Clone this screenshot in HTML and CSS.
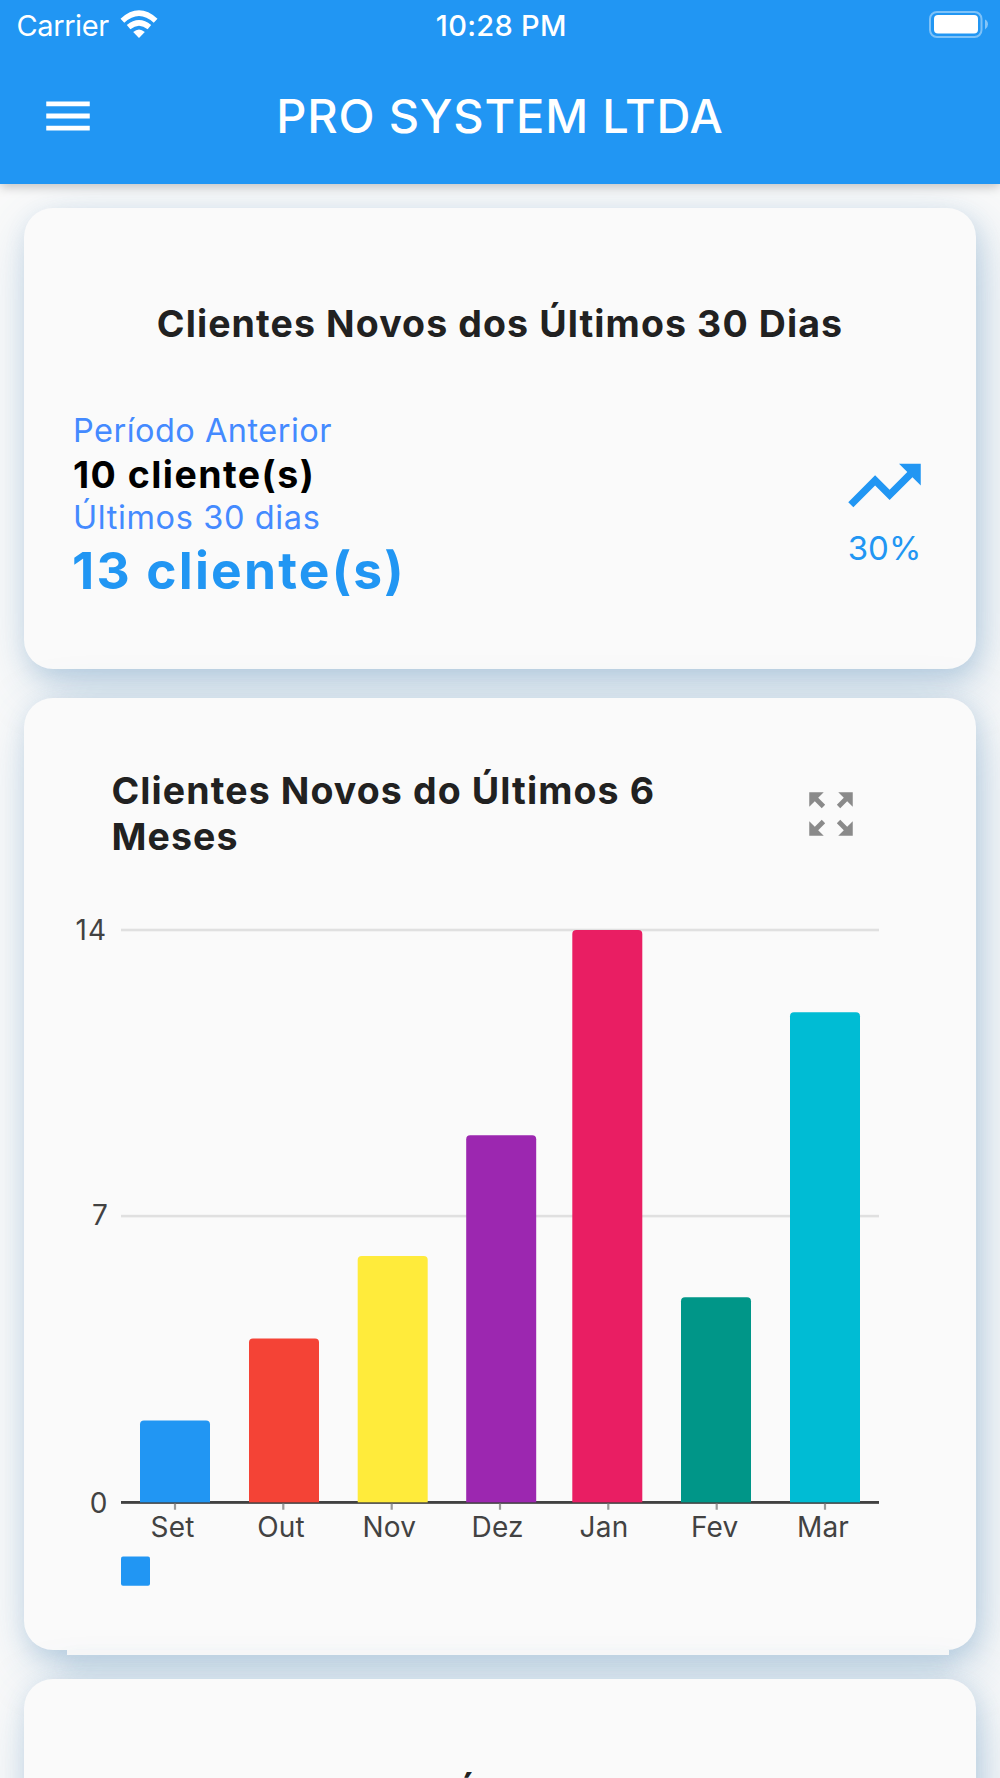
FILE: index.html
```html
<!DOCTYPE html>
<html lang="pt-BR">
<head>
<meta charset="utf-8">
<title>PRO SYSTEM LTDA</title>
<link rel="stylesheet" href="styles.css">
</head>
<body>
<div class="screen">
  <header class="app-bar">
    <div class="status-bar">
      <div class="carrier">
        <span>Carrier</span>
        <svg class="wifi" viewBox="0 0 38 28" width="38" height="28">
          <path d="M19 28 L13.2 22 Q19 17 24.8 22 Z" fill="#fff"/>
          <path d="M8.6 17.2 Q19 8.6 29.4 17.2" fill="none" stroke="#fff" stroke-width="5.6"/>
          <path d="M2.4 10.7 Q19 -4.4 35.6 10.7" fill="none" stroke="#fff" stroke-width="5.6"/>
        </svg>
      </div>
      <div class="clock">10:28 PM</div>
      <svg class="battery" viewBox="0 0 60 27" width="60" height="27">
        <rect x="1" y="1" width="51.5" height="25" rx="7" fill="none" stroke="#fff" stroke-opacity=".42" stroke-width="2"/>
        <rect x="5" y="4" width="44" height="18.5" rx="4" fill="#fff"/>
        <path d="M56 8.5 Q59 10 59 13.2 T56 18.5 Z" fill="#fff" fill-opacity=".45"/>
      </svg>
    </div>
    <div class="toolbar">
      <svg class="menu" viewBox="0 0 24 24" width="58" height="58"><path fill="#fff" d="M3 18h18v-2H3v2zm0-5h18v-2H3v2zm0-7v2h18V6H3z"/></svg>
      <h1 class="app-title">PRO SYSTEM LTDA</h1>
    </div>
  </header>
  <main class="cards">
    <section class="card summary">
      <h2 class="card-title">Clientes Novos dos Últimos 30 Dias</h2>
      <div class="summary-body">
        <div class="stats">
          <div class="label previous">Período Anterior</div>
          <div class="value-small">10 cliente(s)</div>
          <div class="label recent">Últimos 30 dias</div>
          <div class="value-large">13 cliente(s)</div>
        </div>
        <div class="trend">
          <svg viewBox="0 0 24 24" width="87" height="87"><path fill="#2196f3" d="M16 6l2.29 2.29-4.88 4.88-4-4L2 16.59 3.41 18l6-6 4 4 6.3-6.29L22 12V6z"/></svg>
          <div class="percent">30%</div>
        </div>
      </div>
    </section>
    <section class="card chart-card">
      <div class="chart-head">
        <h2 class="card-title">Clientes Novos do Últimos 6 Meses</h2>
        <svg class="expand" viewBox="0 0 24 24" width="58" height="58"><path fill="#8a8a8a" d="M15 3l2.3 2.3-2.89 2.87 1.42 1.42L18.7 6.7 21 9V3zM3 9l2.3-2.3 2.87 2.89 1.42-1.42L6.7 5.3 9 3H3zM9 21l-2.3-2.3 2.89-2.87-1.42-1.42L5.3 17.3 3 15v6zM21 15l-2.3 2.3-2.87-2.89-1.42 1.42 2.89 2.87L15 21h6z"/></svg>
      </div>
      <svg class="chart" viewBox="67 900 882 700" width="882" height="700">
        <g fill="#e0e0e0">
          <rect x="121" y="928.7" width="758" height="2.6"/>
          <rect x="121" y="1214.8" width="758" height="2.6"/>
        </g>
        <rect x="121" y="1501" width="758" height="2.7" fill="#424242"/>
        <path fill="#2196f3" d="M140 1502.5V1424.5q0-4 4-4h62q4 0 4 4V1502.5z"/>
        <path fill="#f44336" d="M249 1502.5V1342.5q0-4 4-4h62q4 0 4 4V1502.5z"/>
        <path fill="#ffeb3b" d="M357.7 1502.5V1260q0-4 4-4h62q4 0 4 4V1502.5z"/>
        <path fill="#9c27b0" d="M466.2 1502.5V1139.2q0-4 4-4h62q4 0 4 4V1502.5z"/>
        <path fill="#e91e63" d="M572.3 1502.5V934q0-4 4-4h62q4 0 4 4V1502.5z"/>
        <path fill="#009688" d="M681 1502.5V1301.2q0-4 4-4h62q4 0 4 4V1502.5z"/>
        <path fill="#00bcd4" d="M790 1502.5V1016.2q0-4 4-4h62q4 0 4 4V1502.5z"/>
        <rect x="121" y="1502.5" width="758" height="1.2" fill="#424242" fill-opacity=".7"/>
        <path stroke="#9a9a9a" stroke-width="2.2" d="M175 1503.7v6M283.3 1503.7v6M391.7 1503.7v6M500 1503.7v6M608.3 1503.7v6M716.7 1503.7v6M825 1503.7v6"/>
        <g class="axis" text-anchor="end">
          <text x="107" y="940" letter-spacing="1">14</text>
          <text x="108" y="1225">7</text>
          <text x="107.5" y="1512.5">0</text>
        </g>
        <g class="axis" text-anchor="middle">
          <text x="172.6" y="1536.5">Set</text>
          <text x="281" y="1536.5">Out</text>
          <text x="389.3" y="1536.5">Nov</text>
          <text x="497.7" y="1536.5">Dez</text>
          <text x="604" y="1536.5">Jan</text>
          <text x="714.7" y="1536.5">Fev</text>
          <text x="823" y="1536.5">Mar</text>
        </g>
        <rect x="121" y="1556.5" width="29" height="29.3" rx="2" fill="#2196f3"/>
      </svg>
      <div class="chart-foot"></div>
    </section>
    <section class="card next">
      <h2 class="card-title">Ú</h2>
    </section>
  </main>
</div>
</body>
</html>
```
FILE: styles.css
```css
* { box-sizing: border-box; }

body {
  margin: 0;
  background: #fafafa;
  font-family: Inter, "Liberation Sans", sans-serif;
}

.screen {
  width: 1000px;
  height: 1778px;
  overflow: hidden;
  display: flex;
  flex-direction: column;
}

.app-bar {
  flex: none;
  position: relative;
  z-index: 2;
  height: 183.5px;
  background: #2196f3;
  color: #fff;
  box-shadow: 0 3px 10px rgba(0, 0, 0, .22);
}

.status-bar {
  display: grid;
  grid-template-columns: 1fr auto 1fr;
  height: 48px;
  padding: 0 11px 0 16.5px;
  font-size: 29px;
  line-height: 51px;
}

.carrier { display: flex; align-items: flex-start; letter-spacing: -.4px; }
.wifi { margin: 10px 0 0 11px; }
.clock { font-weight: 500; letter-spacing: .3px; padding-right: 3px; }
.battery { justify-self: end; margin-top: 11px; }

.toolbar {
  display: grid;
  grid-template-columns: 100px 1fr 100px;
  align-items: center;
  height: 135.5px;
}
.menu { margin-left: 38.7px; }

.app-title {
  margin: 0;
  text-align: center;
  font-size: 47px;
  font-weight: 500;
  letter-spacing: .8px;
  line-height: 60px;
}

.cards {
  display: flex;
  flex-direction: column;
  gap: 29px;
  padding: 24.5px 24px 0;
}

.card {
  flex: none;
  border-radius: 29px;
  background: #fafafa;
  box-shadow:
    3px 8px 22px rgba(70, 130, 180, .2),
    7px 18px 58px rgba(70, 130, 180, .28);
}

.card-title {
  margin: 0;
  color: #212121;
  font-size: 37.5px;
  font-weight: 650;
  letter-spacing: 1.1px;
  line-height: 46px;
}

.summary { height: 461px; padding: 92.7px 40px 0 48px; }
.summary .card-title { text-align: center; margin-right: 8px; }
.summary-body { display: flex; justify-content: space-between; margin: 64px 8px 0 0; }
.label { color: #448aff; font-size: 32.5px; }
.previous { line-height: 39px; letter-spacing: .47px; padding-left: 1px; }
.value-small { color: #000; font-size: 37.5px; font-weight: 650; line-height: 49px; letter-spacing: 1.45px; padding-left: 1px; }
.recent { line-height: 37px; letter-spacing: .62px; padding-left: 1px; }
.value-large { color: #2196f3; font-size: 51.5px; font-weight: 700; line-height: 69px; letter-spacing: 2.2px; }
.trend {
  display: flex;
  flex-direction: column;
  align-items: center;
  padding-top: 31px;
}
.percent { color: #2196f3; font-size: 33px; line-height: 39px; }

.chart-card {
  height: 951.5px;
  padding: 70px 43px 0;
  display: flex;
  flex-direction: column;
}
.chart-head {
  flex: none;
  display: flex;
  justify-content: space-between;
  height: 132px;
  padding: 0 73px 0 44.5px;
}
.chart-head .card-title { width: 580px; }
.expand { margin-top: 17px; }
.chart { flex: none; display: block; margin: 0 -12px 0 0; }
.axis { font-size: 28px; fill: #424242; letter-spacing: .2px; }

/* strip hanging below the chart card */
.chart-foot {
  flex: none;
  height: 5px;
  margin: 49.5px -16px 0 0;
  background: #f8f8f8;
  box-shadow: 0 12px 18px rgba(70, 130, 180, .22);
}

.next { height: 300px; padding: 92.7px 0 0 428.5px; }
```
